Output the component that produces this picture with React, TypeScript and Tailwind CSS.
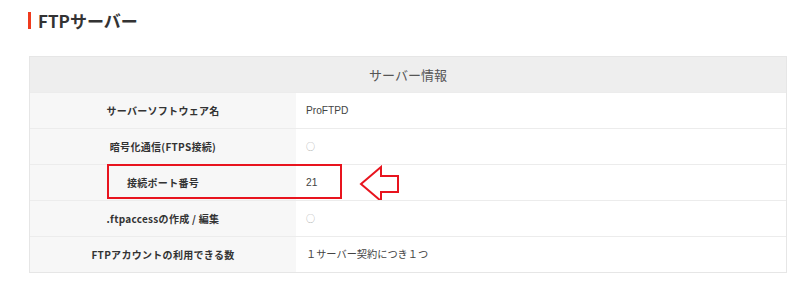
import { FC } from "react";

type Row = {
	label: string;
	value: string;
	mark?: boolean;
	highlight?: boolean;
};

const rows: Row[] = [
	{ label: "サーバーソフトウェア名", value: "ProFTPD" },
	{ label: "暗号化通信(FTPS接続)", value: "○", mark: true },
	{ label: "接続ポート番号", value: "21", highlight: true },
	{ label: ".ftpaccessの作成 / 編集", value: "○", mark: true },
	{ label: "FTPアカウントの利用できる数", value: "１サーバー契約につき１つ" },
];

const font = { fontFamily: '"Noto Sans CJK JP", "Noto Sans", sans-serif' };
const valueFont = { fontFamily: '"Liberation Sans", "Noto Sans CJK JP", sans-serif' };

const SpecRow: FC<{ row: Row }> = ({ row }) => (
	<div className="relative flex h-[36px] border-t border-[#ececec]">
		<div className="flex w-[266px] shrink-0 items-center justify-center bg-[#f7f7f7] text-[10px] font-bold tracking-[0.3px] text-[#333]">
			{row.label}
		</div>
		{row.mark ? (
			<div className="flex flex-1 items-center bg-white pl-[10px] text-[9px] text-[#aaa]">{row.value}</div>
		) : (
			<div style={valueFont} className="flex flex-1 items-center bg-white pl-[10px] text-[10.2px] text-[#444]">
				{row.value}
			</div>
		)}
		{row.highlight && (
			<>
				<div className="absolute left-[77px] top-[-1px] h-[35px] w-[235px] border-2 border-[#e8141e]" />
				<svg className="absolute left-[329px] top-0" width="42" height="38" viewBox="0 0 42 38">
					<path
						d="M2 19 L22 2 L22 11 L39 11 L39 27 L22 27 L22 36 Z"
						fill="white"
						stroke="#e8141e"
						strokeWidth="2"
						strokeLinejoin="miter"
					/>
				</svg>
			</>
		)}
	</div>
);

export default function App() {
	return (
		<div className="h-[290px] w-[800px] bg-white" style={font}>
			<div className="flex items-center pl-[28px] pt-[11px]">
				<span className="h-[17px] w-[3px] bg-[#ef3b1e]" />
				<h2 className="ml-[7px] text-[17px] font-bold leading-[19px] text-[#333]">FTPサーバー</h2>
			</div>
			<div className="ml-[29px] mt-[26px] w-[758px] border border-[#e6e6e6]">
				<div className="flex h-[35px] items-center justify-center bg-[#eeeeee] text-[13px] text-[#555]">
					サーバー情報
				</div>
				{rows.map((row) => (
					<SpecRow key={row.label} row={row} />
				))}
			</div>
		</div>
	);
}
